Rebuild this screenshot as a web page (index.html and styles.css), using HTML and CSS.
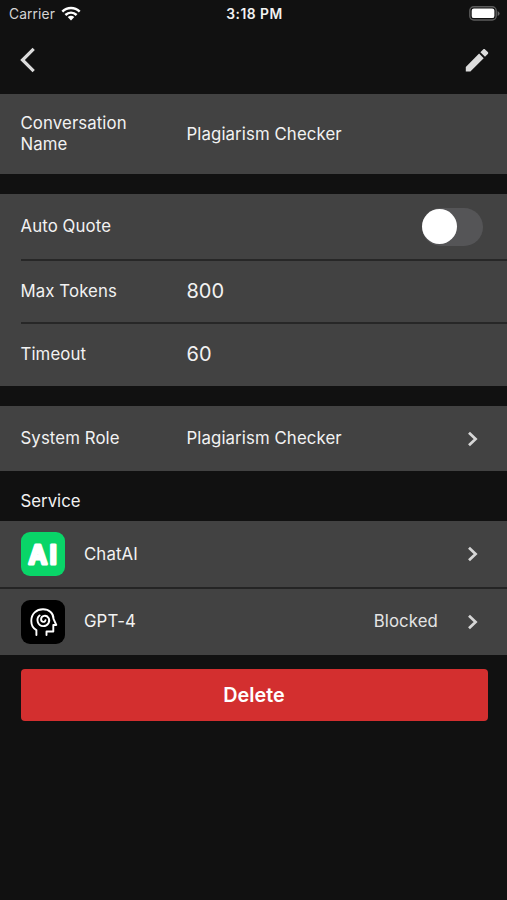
FILE: index.html
```html
<!DOCTYPE html>
<html lang="en">
<head>
<meta charset="utf-8">
<title>Conversation</title>
<link rel="stylesheet" href="styles.css">
</head>
<body>
<div class="status">
  <div class="carrier"><span>Carrier</span>
    <svg class="wifi" width="20" height="15" viewBox="0 0 20 15" fill="none" stroke="#fff" stroke-width="2.5"><path d="M1.3 5.7C6.3 .9 13.7 .9 18.7 5.7M4.4 9C7.7 5.9 12.3 5.9 15.6 9"/><path d="M6.7 11.1Q10 8.4 13.3 11.1L10 14.5Z" fill="#fff" stroke="none"/></svg>
  </div>
  <div class="time">3:18 PM</div>
  <svg class="battery" width="31" height="15" viewBox="0 0 31 15"><rect x=".8" y=".8" width="26.4" height="13.2" rx="4" fill="#111" stroke="#5c5c5c" stroke-width="1.4"/><rect x="2.7" y="2.6" width="22.7" height="9.5" rx="2.2" fill="#fff"/><path d="M28.6 5v5Q30.6 9 30.6 7.5T28.6 5Z" fill="#666"/></svg>
</div>
<header class="nav">
  <svg width="16" height="26" viewBox="0 0 16 26" fill="none" stroke="#dcdcdc" stroke-width="3.2"><path d="M13.7 1.8 2.5 13 13.7 24.2"/></svg>
  <svg width="24" height="24" viewBox="0 0 24 24" fill="#dcdcdc"><path d="M.8 18.9V23.5H5.4L18.7 10.2 14.1 5.6ZM22.8 6.1C23.4 5.5 23.4 4.7 22.8 4.1L20.1 1.4C19.5.8 18.7.8 18.1 1.4L15.4 4.2 20 8.8Z"/></svg>
</header>
<section class="group">
  <div class="row name"><span class="label">Conversation Name</span><span class="value">Plagiarism Checker</span></div>
</section>
<section class="group settings">
  <div class="row quote"><span class="label">Auto Quote</span><span class="toggle"></span></div>
  <div class="row tokens"><span class="label">Max Tokens</span><span class="value number">800</span></div>
  <div class="row timeout"><span class="label">Timeout</span><span class="value number">60</span></div>
</section>
<section class="group role-group">
  <div class="row role"><span class="label">System Role</span><span class="value">Plagiarism Checker</span><svg class="chevron" width="12" height="16" viewBox="0 0 12 16"><path d="M2 1.7 8.6 8 2 14.3"/></svg></div>
</section>
<h2 class="heading">Service</h2>
<section class="group services">
  <div class="row service"><span class="logo chat"><svg width="44" height="44" viewBox="0 0 44 44"><text x="7.8 28.8" y="32">AI</text></svg></span><span class="title">ChatAI</span><svg class="chevron" width="12" height="16" viewBox="0 0 12 16"><path d="M2 1.7 8.6 8 2 14.3"/></svg></div>
  <div class="row service"><span class="logo gpt"><svg width="44" height="44" viewBox="0 0 44 44" fill="none" stroke="#fff" stroke-width="1.9" stroke-linejoin="round" stroke-linecap="round"><path d="M15.4 35V30.1C12 28.3 10.3 25.3 10.3 21C10.3 13.7 15.4 9.3 22 9.3C28.3 9.3 32.5 13.3 32.5 18.8L35.3 25H32.3V31.5H25.5V35"/><path d="M18.6 15.4C14.6 18.8 16.6 26.1 22.2 26.1C27 26.1 29.7 21.2 27.4 17.7C25.2 14.4 20.4 15.6 20.1 19C19.9 22.2 24 23 24.5 20.2"/></svg></span><span class="title">GPT-4</span><span class="state">Blocked</span><svg class="chevron" width="12" height="16" viewBox="0 0 12 16"><path d="M2 1.7 8.6 8 2 14.3"/></svg></div>
</section>
<button class="delete" type="button">Delete</button>
</body>
</html>
```
FILE: styles.css
```css
* { box-sizing: border-box; }
body { margin: 0; height: 900px; background: #111; color: #f2f2f2; font: 16.8px/21px Inter, "Liberation Sans", sans-serif; letter-spacing: .1px; overflow: hidden; }
svg { display: block; flex: none; }
.status { display: grid; grid-template-columns: 1fr auto 1fr; height: 28px; padding: 0 7px 0 9px; align-items: center; font-size: 13.8px; }
.carrier { display: flex; gap: 6px; align-items: center; color: #d4d4d4; }
.wifi { margin-top: -2px; }
.time { font-weight: 600; font-size: 13.8px; letter-spacing: .5px; }
.battery { justify-self: end; margin-top: -1px; }
.nav { display: flex; justify-content: space-between; align-items: center; height: 66px; padding: 0 18px 2px 20px; }
.group { background: #424242; margin-bottom: 20px; }
.row { display: flex; align-items: center; padding-left: 20.5px; }
.label { width: 166px; padding-right: 40px; white-space: nowrap; }
.name { height: 80px; }
.name .label { white-space: normal; }
.number { font-size: 20px; letter-spacing: 0; }
.quote { height: 65px; }
.toggle { width: 61px; height: 38px; margin-left: auto; margin-right: 24.5px; border-radius: 19px; background: #555557; display: flex; align-items: center; }
.toggle::before { content: ""; width: 35px; height: 35px; border-radius: 50%; background: #fff; }
.tokens, .timeout { margin-left: 20.5px; padding-left: 0; border-top: 2px solid #272727; height: 63px; }
.settings { margin-bottom: 20px; height: 191.5px; }
.role-group { margin-bottom: 0; }
.role { height: 65.5px; padding-top: 1px; }
.chevron { margin-left: auto; margin-right: 28px; fill: none; stroke: #d6d6d6; stroke-width: 2.7; }
.heading { margin: 0; height: 50px; padding: 20px 20.5px 0; font-size: 16.8px; font-weight: 400; letter-spacing: 0; }
.services { margin-bottom: 14px; }
.service { height: 66px; }
.service + .service { height: 68px; border-top: 2px solid #242424; padding-bottom: 1px; }
.logo { width: 44px; height: 44px; border-radius: 9px; margin-right: 19.5px; flex: none; overflow: hidden; }
.chat { background: #09d568; }
.chat text { font-size: 25px; font-weight: 600; letter-spacing: 0; fill: #fff; stroke: #fff; stroke-width: 3.2px; stroke-linejoin: round; }
.gpt { background: #000; }
.state { margin-left: auto; color: #e4e4e4; }
.state + .chevron { margin-left: 29px; }
.delete { display: block; width: 467px; height: 52px; margin: 0 0 0 20.5px; padding: 0; border: 0; border-radius: 4px; background: #d32f2f; color: #fff; font: 600 19.8px/52px Inter, "Liberation Sans", sans-serif; letter-spacing: 0; }
```
